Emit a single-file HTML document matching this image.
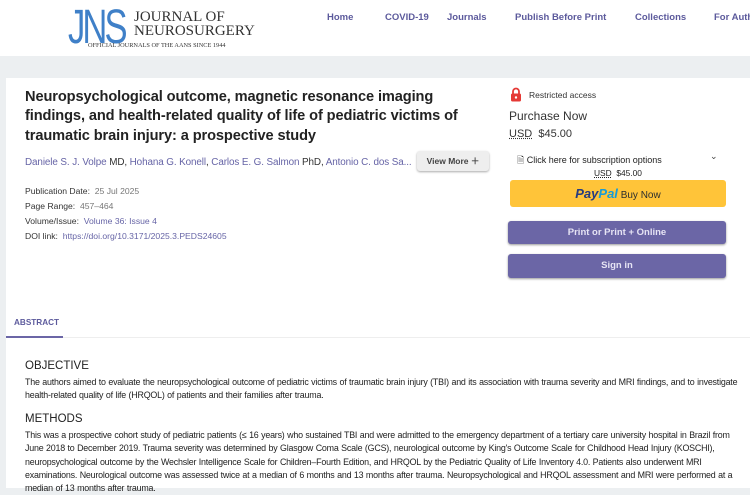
<!DOCTYPE html>
<html><head><meta charset="utf-8"><style>
*{margin:0;padding:0;box-sizing:border-box}
body{width:750px;height:488px;overflow:hidden;background:#eceff1;font-family:"Liberation Sans",sans-serif;position:relative;color:#222}
.hdr{position:absolute;left:0;top:0;width:750px;height:56px;background:#fff}
.nav{position:absolute;top:12px;font-size:9.5px;font-weight:bold;color:#5c5a9c;white-space:nowrap}
.card{position:absolute;left:6px;top:78px;width:744px;height:410px;background:#fff}
.a{position:absolute;white-space:nowrap}
.title{left:25px;top:88px;font-size:14.6px;font-weight:bold;line-height:19.3px;color:#222;white-space:normal;width:470px;letter-spacing:-0.1px}
.meta{font-size:8.6px;color:#333}
.meta span{color:#777}
.meta a,.lnk{color:#6664a6;text-decoration:none}
.btn{position:absolute;border-radius:3px;text-align:center;font-size:9.5px;font-weight:bold;color:#e6e4f4}
.body{font-size:8.9px;line-height:13.3px;color:#222;left:25px;width:716px;white-space:normal;letter-spacing:-0.2px;word-spacing:0.3px}
.h{font-size:11.5px;color:#222}
</style></head><body>
<div class="hdr">
 <div class="a" style="left:68px;top:4px;font-size:48px;color:#3f80c8;letter-spacing:-4px;transform:scaleX(0.72);transform-origin:left;line-height:48px">JNS</div>
 <div class="a" style="left:134px;top:10px;font-family:'Liberation Serif',serif;font-size:15px;color:#333;line-height:14px">JOURNAL OF<br>NEUROSURGERY</div>
 <div class="a" style="left:88px;top:42px;font-family:'Liberation Serif',serif;font-size:6.3px;color:#333;">OFFICIAL JOURNALS OF THE AANS SINCE 1944</div>
 <div class="nav" style="left:327px">Home</div>
 <div class="nav" style="left:385px">COVID-19</div>
 <div class="nav" style="left:447px">Journals</div>
 <div class="nav" style="left:515px">Publish Before Print</div>
 <div class="nav" style="left:635px">Collections</div>
 <div class="nav" style="left:714px">For Auth</div>
</div>
<div class="card"></div>
<div class="a title">Neuropsychological outcome, magnetic resonance imaging findings, and health-related quality of life of pediatric victims of traumatic brain injury: a prospective study</div>
<div class="a" style="left:25px;top:157px;font-size:9.9px;color:#333;letter-spacing:-0.1px"><span class="lnk">Daniele S. J. Volpe</span> MD, <span class="lnk">Hohana G. Konell</span>, <span class="lnk">Carlos E. G. Salmon</span> PhD, <span class="lnk">Antonio C. dos Sa...</span></div>
<div class="btn" style="left:417px;top:151px;width:72px;height:20px;background:#eee;box-shadow:0 1px 2px #aaa;color:#444;font-size:8.5px;line-height:20px">View More ＋</div>
<div class="a meta" style="left:25px;top:186px">Publication Date:&nbsp; <span>25 Jul 2025</span></div>
<div class="a meta" style="left:25px;top:201px">Page Range:&nbsp; <span>457–464</span></div>
<div class="a meta" style="left:25px;top:216px">Volume/Issue:&nbsp; <a>Volume 36: Issue 4</a></div>
<div class="a meta" style="left:25px;top:231px">DOI link:&nbsp; <a>https://doi.org/10.3171/2025.3.PEDS24605</a></div>

<svg class="a" style="left:510px;top:87px" width="12" height="15" viewBox="0 0 12 15"><path d="M3 7V4.5a3 3 0 0 1 6 0V7" stroke="#e53935" stroke-width="1.8" fill="none"/><rect x="1" y="6.5" width="10" height="8" rx="1.5" fill="#e53935"/><circle cx="6" cy="10.5" r="1.2" fill="#fff"/></svg>
<div class="a" style="left:529px;top:90px;font-size:8.5px;color:#333">Restricted access</div>
<div class="a" style="left:509px;top:109px;font-size:12px;color:#333">Purchase Now</div>
<div class="a" style="left:509px;top:128px;font-size:11px;color:#333"><u style="text-decoration:underline dotted">USD</u>&nbsp; $45.00</div>
<div class="a" style="left:517px;top:153px;font-size:9px;color:#222">🗎 Click here for subscription options</div>
<div class="a" style="left:710px;top:151px;font-size:9px;color:#444">⌄</div>
<div class="a" style="left:594px;top:168px;font-size:8.4px;color:#222"><u style="text-decoration:underline dotted">USD</u>&nbsp; $45.00</div>
<div class="btn" style="left:510px;top:180px;width:216px;height:27px;background:#ffc439;line-height:27px;font-weight:normal;color:#2c2e2f;font-size:10px"><b style="font-style:italic;font-size:13px;color:#253b80">Pay</b><b style="font-style:italic;font-size:13px;color:#179bd7">Pal</b> Buy Now</div>
<div class="btn" style="left:508px;top:221px;width:218px;height:23px;line-height:23px;background:#6b66a6;box-shadow:0 1px 2px #999">Print or Print + Online</div>
<div class="btn" style="left:508px;top:254px;width:218px;height:24px;line-height:24px;background:#6b66a6;box-shadow:0 1px 2px #999">Sign in</div>

<div class="a" style="left:14px;top:318px;font-size:8.2px;font-weight:bold;color:#5c5a9c">ABSTRACT</div>
<div class="a" style="left:6px;top:337px;width:744px;height:1px;background:#eee"></div>
<div class="a" style="left:6px;top:336px;width:57px;height:2px;background:#6b66a6"></div>

<div class="a h" style="left:25px;top:360px">OBJECTIVE</div>
<div class="a body" style="top:376px">The authors aimed to evaluate the neuropsychological outcome of pediatric victims of traumatic brain injury (TBI) and its association with trauma severity and MRI findings, and to investigate health-related quality of life (HRQOL) of patients and their families after trauma.</div>
<div class="a h" style="left:25px;top:413px">METHODS</div>
<div class="a body" style="top:429px">This was a prospective cohort study of pediatric patients (≤ 16 years) who sustained TBI and were admitted to the emergency department of a tertiary care university hospital in Brazil from June 2018 to December 2019. Trauma severity was determined by Glasgow Coma Scale (GCS), neurological outcome by King's Outcome Scale for Childhood Head Injury (KOSCHI), neuropsychological outcome by the Wechsler Intelligence Scale for Children–Fourth Edition, and HRQOL by the Pediatric Quality of Life Inventory 4.0. Patients also underwent MRI examinations. Neurological outcome was assessed twice at a median of 6 months and 13 months after trauma. Neuropsychological and HRQOL assessment and MRI were performed at a median of 13 months after trauma.</div>
</body></html>
